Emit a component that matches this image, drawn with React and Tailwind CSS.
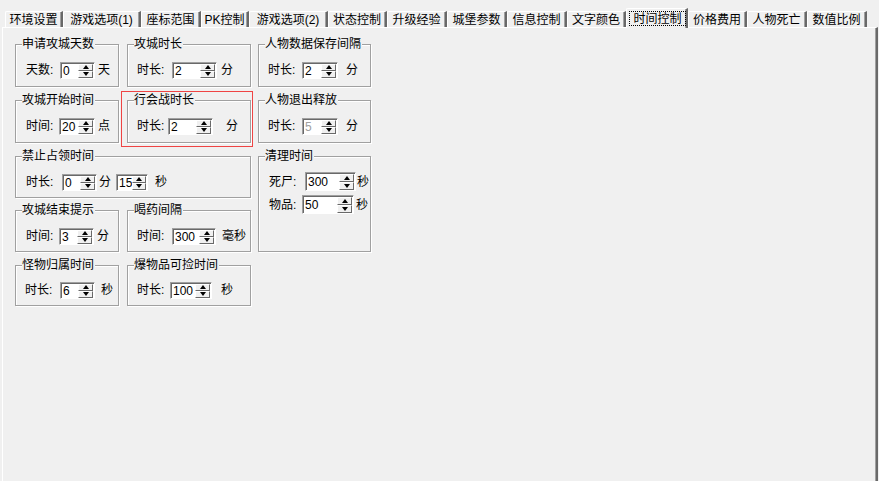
import React from 'react';

const tabs = [
  ['环境设置', 'w-[58px]'],
  ['游戏选项(1)', 'w-[78px]'],
  ['座标范围', 'w-[60px]'],
  ['PK控制', 'w-[48px]'],
  ['游戏选项(2)', 'w-[79px]'],
  ['状态控制', 'w-[59px]'],
  ['升级经验', 'w-[60px]'],
  ['城堡参数', 'w-[60px]'],
  ['信息控制', 'w-[60px]'],
  ['文字颜色', 'w-[59px]'],
  ['时间控制', 'w-[62px]', true],
  ['价格费用', 'w-[59px]'],
  ['人物死亡', 'w-[60px]'],
  ['数值比例', 'w-[60px]'],
];

function Tab({ label, w, active }) {
  if (active) {
    return (
      <div className={`${w} h-[20px] -mb-[1px] relative z-10 flex bg-[#f0f0f0] border-l border-t border-white border-r-2 border-r-[#696969] shadow-[inset_-1px_0_0_#a0a0a0] rounded-tl-[2px]`}>
        <div className="flex-1 flex items-center justify-center mt-[2px] mb-[2px] ml-[2px] mr-0 border border-dotted border-black">
          {label}
        </div>
      </div>
    );
  }
  return (
    <div className={`${w} h-[16px] flex items-center justify-center border-l border-t border-white border-r-2 border-r-[#696969] shadow-[inset_-1px_0_0_#a0a0a0] rounded-tl-[2px]`}>
      {label}
    </div>
  );
}

function Box({ title, className, children }) {
  return (
    <div className={`shrink-0 border border-[#a0a0a0] shadow-[inset_1px_1px_0_#fff,1px_1px_0_#fff] ${className}`}>
      <div className="-mt-[8px] ml-[6px] w-fit bg-[#f0f0f0] pr-[1px] leading-[14px]">{title}</div>
      {children}
    </div>
  );
}

function Arrow({ up }) {
  return (
    <div className="flex-1 flex items-center justify-center bg-[#f0f0f0] border-t border-l border-t-white border-l-white border-b border-r border-b-[#696969] border-r-[#696969]">
      {up ? (
        <div className="w-[1px] h-0 border-x-[3px] border-x-transparent border-b-[4px] border-b-black" />
      ) : (
        <div className="w-[1px] h-0 border-x-[3px] border-x-transparent border-t-[4px] border-t-black" />
      )}
    </div>
  );
}

function Spin({ value, className, disabled }) {
  return (
    <div className={`flex shrink-0 bg-white border border-t-[#a0a0a0] border-l-[#a0a0a0] border-r-white border-b-white shadow-[inset_1px_1px_0_#696969] pl-[2px] pt-[1px] pr-[1px] ${className}`}>
      <span className={`flex-1 flex items-center leading-none ${disabled ? 'text-[#a0a0a0]' : 'text-black'}`}>{value}</span>
      <div className="w-[15px] flex flex-col">
        <Arrow up />
        <Arrow />
      </div>
    </div>
  );
}

export default function App() {
  return (
    <div className="w-[879px] h-[481px] bg-[#f0f0f0] text-black text-[12px] font-['Liberation_Sans','Noto_Sans_CJK_SC',sans-serif] pt-[8px] flex flex-col overflow-hidden">
      <div className="flex items-end h-[19px] pl-[5px]">
        {tabs.map(([label, w, active]) => (
          <Tab key={label} label={label} w={w} active={active} />
        ))}
      </div>

      <div className="flex-1 ml-[2px] w-[876px] border-t border-l border-white border-r-2 border-r-[#696969] shadow-[inset_-1px_0_0_#a0a0a0]">
        <div className="flex gap-[7px] pl-[12px] pt-[16px]">
          {/* left two columns */}
          <div className="flex flex-col w-[236px]">
            <div className="flex gap-[8px]">
              <Box title="申请攻城天数" className="w-[104px] h-[43px]">
                <div className="flex items-center mt-[10px] pl-[10px]">
                  <span className="w-[34px] shrink-0">天数:</span>
                  <Spin value="0" className="w-[35px] h-[17px]" />
                  <span className="ml-[3px]">天</span>
                </div>
              </Box>
              <Box title="攻城时长" className="w-[124px] h-[43px]">
                <div className="flex items-center mt-[10px] pl-[9px]">
                  <span className="w-[35px] shrink-0">时长:</span>
                  <Spin value="2" className="w-[45px] h-[17px]" />
                  <span className="ml-[4px]">分</span>
                </div>
              </Box>
            </div>

            <div className="flex gap-[8px] mt-[13px]">
              <Box title="攻城开始时间" className="w-[104px] h-[43px]">
                <div className="flex items-center mt-[10px] pl-[10px]">
                  <span className="w-[33px] shrink-0">时间:</span>
                  <Spin value="20" className="w-[36px] h-[17px]" />
                  <span className="ml-[3px]">点</span>
                </div>
              </Box>
              <div className="relative">
                <Box title="行会战时长" className="w-[124px] h-[43px]">
                  <div className="flex items-center mt-[10px] pl-[9px]">
                    <span className="w-[31px] shrink-0">时长:</span>
                    <Spin value="2" className="w-[45px] h-[17px]" />
                    <span className="ml-[13px]">分</span>
                  </div>
                </Box>
                <div className="absolute -left-[6px] -top-[9px] -right-[2px] -bottom-[4px] border border-[#ef4444] pointer-events-none" />
              </div>
            </div>

            <div className="mt-[13px]">
              <Box title="禁止占领时间" className="w-[236px] h-[42px]">
                <div className="flex items-center mt-[10px] pl-[10px]">
                  <span className="w-[36px] shrink-0">时长:</span>
                  <Spin value="0" className="w-[35px] h-[17px]" />
                  <span className="ml-[2px]">分</span>
                  <Spin value="15" className="ml-[5px] w-[32px] h-[17px]" />
                  <span className="ml-[7px]">秒</span>
                </div>
              </Box>
            </div>

            <div className="flex gap-[8px] mt-[12px]">
              <Box title="攻城结束提示" className="w-[104px] h-[42px]">
                <div className="flex items-center mt-[10px] pl-[10px]">
                  <span className="w-[33px] shrink-0">时间:</span>
                  <Spin value="3" className="w-[35px] h-[17px]" />
                  <span className="ml-[3px]">分</span>
                </div>
              </Box>
              <Box title="喝药间隔" className="w-[124px] h-[42px]">
                <div className="flex items-center mt-[10px] pl-[9px]">
                  <span className="w-[35px] shrink-0">时间:</span>
                  <Spin value="300" className="w-[44px] h-[17px]" />
                  <span className="ml-[6px]">毫秒</span>
                </div>
              </Box>
            </div>

            <div className="flex gap-[8px] mt-[13px]">
              <Box title="怪物归属时间" className="w-[104px] h-[41px]">
                <div className="flex items-center mt-[9px] pl-[9px]">
                  <span className="w-[35px] shrink-0">时长:</span>
                  <Spin value="6" className="w-[35px] h-[17px]" />
                  <span className="ml-[6px]">秒</span>
                </div>
              </Box>
              <Box title="爆物品可捡时间" className="w-[124px] h-[41px]">
                <div className="flex items-center mt-[9px] pl-[9px]">
                  <span className="w-[33px] shrink-0">时长:</span>
                  <Spin value="100" className="w-[42px] h-[17px]" />
                  <span className="ml-[9px]">秒</span>
                </div>
              </Box>
            </div>
          </div>

          {/* right column */}
          <div className="flex flex-col w-[113px]">
            <Box title="人物数据保存间隔" className="w-[113px] h-[43px]">
              <div className="flex items-center mt-[10px] pl-[9px]">
                <span className="w-[34px] shrink-0">时长:</span>
                <Spin value="2" className="w-[36px] h-[17px]" />
                <span className="ml-[8px]">分</span>
              </div>
            </Box>
            <Box title="人物退出释放" className="mt-[13px] w-[113px] h-[43px]">
              <div className="flex items-center mt-[10px] pl-[9px]">
                <span className="w-[34px] shrink-0">时长:</span>
                <Spin value="5" disabled className="w-[36px] h-[17px]" />
                <span className="ml-[8px]">分</span>
              </div>
            </Box>
            <Box title="清理时间" className="mt-[13px] w-[113px] h-[96px]">
              <div className="flex items-center mt-[9px] pl-[10px]">
                <span className="w-[36px] shrink-0">死尸:</span>
                <Spin value="300" className="w-[51px] h-[19px]" />
                <span className="ml-[1px]">秒</span>
              </div>
              <div className="flex items-center mt-[4px] pl-[10px]">
                <span className="w-[33px] shrink-0">物品:</span>
                <Spin value="50" className="w-[52px] h-[19px]" />
                <span className="ml-[2px]">秒</span>
              </div>
            </Box>
          </div>
        </div>
      </div>
    </div>
  );
}
